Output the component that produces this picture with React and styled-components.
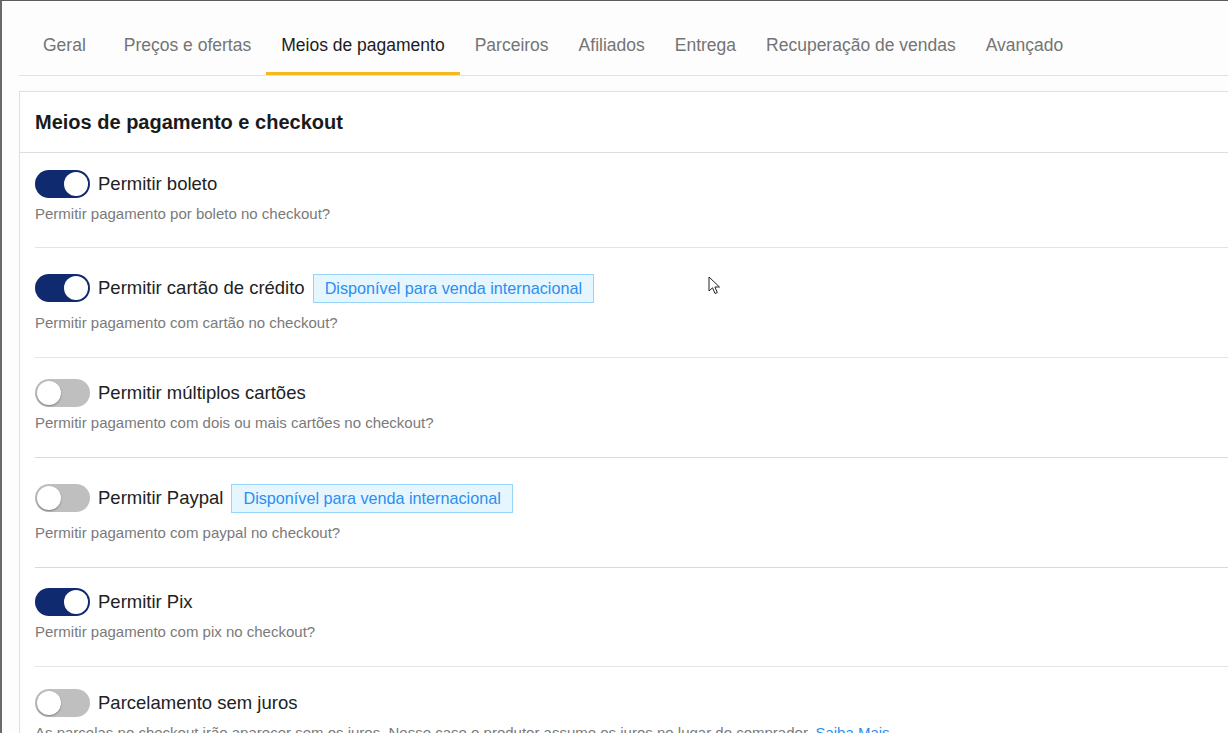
import React from "react";
import styled, { createGlobalStyle } from "styled-components";

const Global = createGlobalStyle`
  html, body { margin: 0; padding: 0; background: #fdfdfd; overflow: hidden; }
  body { font-family: "Liberation Sans", Arial, sans-serif; }
  * { box-sizing: border-box; }
`;

const Frame = styled.div`
  position: relative;
  width: 1260px;
  height: 733px;
  border-top: 1px solid #5c5c5c;
  border-left: 2px solid #6a6a6a;
  padding: 15px 0 0 17px;
  background: #fdfdfd;
  overflow: hidden;
`;

const TabList = styled.div`
  display: flex;
  align-items: stretch;
  height: 60px;
  padding-left: 9px;
  border-bottom: 1px solid #e2e2e2;
`;

const Tab = styled.div`
  display: flex;
  align-items: center;
  padding: 0 15px;
  font-size: 17.5px;
  color: ${(p) => (p.$active ? "#1c1c1c" : "#747474")};
  box-shadow: ${(p) => (p.$active ? "inset 0 -3px 0 #f6b81a" : "none")};
  white-space: nowrap;
  &:first-child { margin-right: 8px; }
`;

const Card = styled.section`
  margin-top: 15px;
  background: #fff;
  border: 1px solid #e0e0e0;
`;

const CardHeader = styled.h2`
  margin: 0;
  padding: 0 15px;
  height: 61px;
  display: flex;
  align-items: center;
  font-size: 20px;
  font-weight: 700;
  color: #1a1a1a;
  border-bottom: 1px solid #dedede;
`;

const CardBody = styled.div`
  padding: 0 0 0 15px;
`;

const Row = styled.div`
  padding: ${(p) => p.$pt}px 0 ${(p) => p.$pb}px;
  border-bottom: 1px solid ${(p) => (p.$strong ? "#d9d9d9" : "#e4e4e4")};
`;

const TitleLine = styled.div`
  display: flex;
  align-items: center;
  min-height: ${(p) => (p.$tall ? "38px" : "28px")};
`;

const Switch = styled.span`
  position: relative;
  flex: none;
  width: 55px;
  height: 28px;
  margin-right: 8px;
  border-radius: 14px;
  background: ${(p) => (p.$on ? "#0f2a6f" : "#bfbfbf")};
  &::after {
    content: "";
    position: absolute;
    top: 2px;
    left: ${(p) => (p.$on ? "29px" : "2px")};
    width: 24px;
    height: 24px;
    border-radius: 50%;
    background: #fff;
    box-shadow: ${(p) => (p.$on ? "none" : "0 1px 2px rgba(0,0,0,0.35)")};
  }
`;

const Label = styled.span`
  font-size: 18.5px;
  color: #222;
`;

const Badge = styled.span`
  display: inline-flex;
  align-items: center;
  height: 29px;
  margin-left: 8px;
  padding: 0 11px;
  font-size: 16.2px;
  color: #2d8ef0;
  background: #e6f6ff;
  border: 1px solid #97d3fb;
`;

const Desc = styled.p`
  margin: 6px 0 0;
  font-size: 15px;
  line-height: 20px;
  color: #7a7a7a;
  white-space: nowrap;
`;

const Link = styled.a`
  color: #2d8ef0;
  text-decoration: none;
`;

const Cursor = styled.svg`
  position: absolute;
  left: 706px;
  top: 275px;
`;

const tabs = [
  "Geral",
  "Preços e ofertas",
  "Meios de pagamento",
  "Parceiros",
  "Afiliados",
  "Entrega",
  "Recuperação de vendas",
  "Avançado",
];

const rows = [
  { on: true, label: "Permitir boleto", desc: "Permitir pagamento por boleto no checkout?", pt: 17, pb: 23 },
  { on: true, label: "Permitir cartão de crédito", badge: true, desc: "Permitir pagamento com cartão no checkout?", pt: 21, pb: 24 },
  { on: false, label: "Permitir múltiplos cartões", desc: "Permitir pagamento com dois ou mais cartões no checkout?", strong: true, pt: 21, pb: 24 },
  { on: false, label: "Permitir Paypal", badge: true, desc: "Permitir pagamento com paypal no checkout?", strong: true, pt: 21, pb: 24 },
  { on: true, label: "Permitir Pix", desc: "Permitir pagamento com pix no checkout?", pt: 20, pb: 24 },
];

export default function App() {
  return (
    <>
      <Global />
      <Frame>
        <TabList>
          {tabs.map((t) => (
            <Tab key={t} $active={t === "Meios de pagamento"}>
              {t}
            </Tab>
          ))}
        </TabList>
        <Card>
          <CardHeader>Meios de pagamento e checkout</CardHeader>
          <CardBody>
            {rows.map((r) => (
              <Row key={r.label} $pt={r.pt} $pb={r.pb} $strong={r.strong}>
                <TitleLine $tall={r.badge}>
                  <Switch $on={r.on} />
                  <Label>{r.label}</Label>
                  {r.badge && <Badge>Disponível para venda internacional</Badge>}
                </TitleLine>
                <Desc>{r.desc}</Desc>
              </Row>
            ))}
            <Row $pt={22} $pb={24}>
              <TitleLine>
                <Switch $on={false} />
                <Label>Parcelamento sem juros</Label>
              </TitleLine>
              <Desc>
                As parcelas no checkout irão aparecer sem os juros. Nesse caso o produtor assume os juros no lugar do comprador.{" "}
                <Link href="#">Saiba Mais</Link>
              </Desc>
            </Row>
          </CardBody>
        </Card>
        <Cursor width="14" height="20" viewBox="0 0 14 20">
          <path d="M1 1 L1 15 L4.5 11.8 L7 17.5 L9.3 16.5 L6.9 11 L11.5 11 Z" fill="#fff" stroke="#222" strokeWidth="1" strokeLinejoin="round" />
        </Cursor>
      </Frame>
    </>
  );
}
